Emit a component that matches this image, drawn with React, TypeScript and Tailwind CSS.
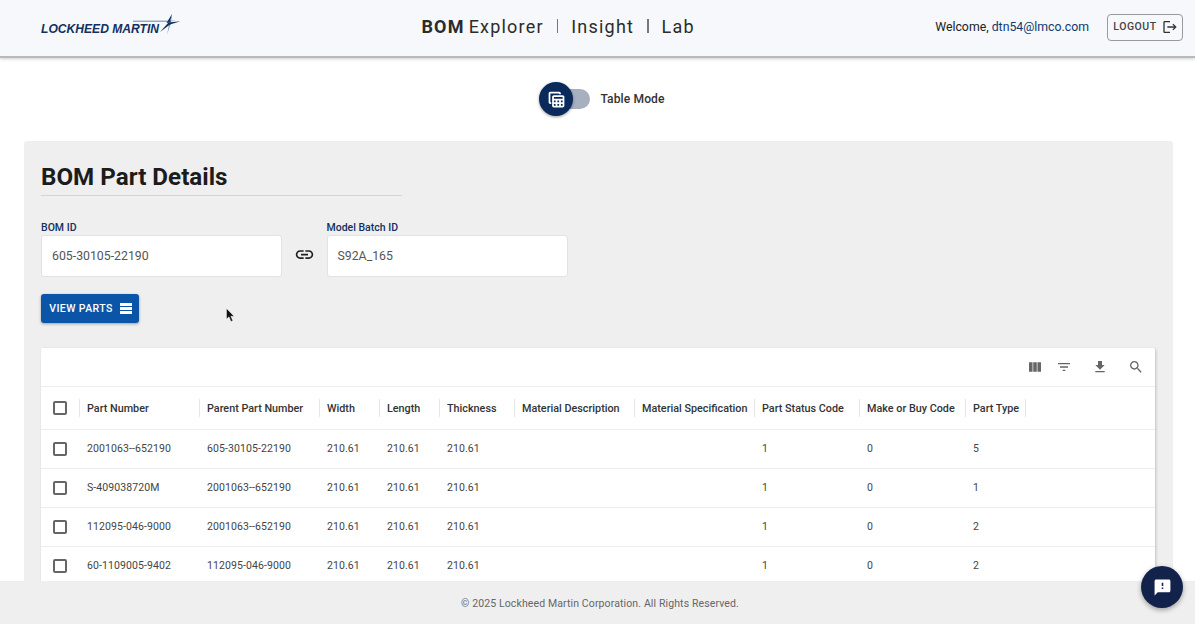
const columns = [
  { label: "Part Number", width: "w-[120px]" },
  { label: "Parent Part Number", width: "w-[120px]" },
  { label: "Width", width: "w-[60px]" },
  { label: "Length", width: "w-[60px]" },
  { label: "Thickness", width: "w-[75px]" },
  { label: "Material Description", width: "w-[120px]" },
  { label: "Material Specification", width: "w-[120px]" },
  { label: "Part Status Code", width: "w-[105px]" },
  { label: "Make or Buy Code", width: "w-[106px]" },
  { label: "Part Type", width: "w-[60px]" },
];

const rows = [
  ["2001063--652190", "605-30105-22190", "210.61", "210.61", "210.61", "", "", "1", "0", "5"],
  ["S-409038720M", "2001063--652190", "210.61", "210.61", "210.61", "", "", "1", "0", "1"],
  ["112095-046-9000", "2001063--652190", "210.61", "210.61", "210.61", "", "", "1", "0", "2"],
  ["60-1109005-9402", "112095-046-9000", "210.61", "210.61", "210.61", "", "", "1", "0", "2"],
];

// material icon paths
const icons = {
  columns: "M14.67 5v14H9.33V5h5.34zm1 14H21V5h-5.33v14zm-7.34 0V5H3v14h5.33z",
  filter: "M10 18h4v-2h-4v2zM3 6v2h18V6H3zm3 7h12v-2H6v2z",
  download: "M5 20h14v-2H5v2zM19 9h-4V3H9v6H5l7 7 7-7z",
  search:
    "M15.5 14h-.79l-.28-.27C15.41 12.59 16 11.11 16 9.5 16 5.91 13.09 3 9.5 3S3 5.91 3 9.5 5.91 16 9.5 16c1.61 0 3.09-.59 4.23-1.57l.27.28v.79l5 4.99L20.49 19l-4.99-5zm-6 0C7.01 14 5 11.99 5 9.5S7.01 5 9.5 5 14 7.01 14 9.5 11.99 14 9.5 14z",
  link: "M3.9 12c0-1.71 1.39-3.1 3.1-3.1h4V7H7c-2.76 0-5 2.24-5 5s2.24 5 5 5h4v-1.9H7c-1.71 0-3.1-1.39-3.1-3.1zM8 13h8v-2H8v2zm9-6h-4v1.9h4c1.71 0 3.1 1.39 3.1 3.1s-1.39 3.1-3.1 3.1h-4V17h4c2.76 0 5-2.24 5-5s-2.24-5-5-5z",
  table:
    "M19 7H9c-1.1 0-2 .9-2 2v10c0 1.1.9 2 2 2h10c1.1 0 2-.9 2-2V9c0-1.1-.9-2-2-2zm0 2v2H9V9h10zm-6 6v-2h2v2h-2zm2 2v2h-2v-2h2zm-4-2H9v-2h2v2zm6-2h2v2h-2v-2zm-8 4h2v2H9v-2zm8 2v-2h2v2h-2zM6 17H5c-1.1 0-2-.9-2-2V5c0-1.1.9-2 2-2h10c1.1 0 2 .9 2 2v1h-2V5H5v10h1v2z",
  logout:
    "M17 7l-1.41 1.41L18.17 11H8v2h10.17l-2.58 2.58L17 17l5-5zM4 5h8V3H4c-1.1 0-2 .9-2 2v14c0 1.1.9 2 2 2h8v-2H4V5z",
  feedback:
    "M20 2H4c-1.1 0-1.99.9-1.99 2L2 22l4-4h14c1.1 0 2-.9 2-2V4c0-1.1-.9-2-2-2zm-7 12h-2v-2h2v2zm0-4h-2V6h2v4z",
};

function Icon({ d, size, className }: { d: string; size: number; className?: string }) {
  return (
    <svg width={size} height={size} viewBox="0 0 24 24" fill="currentColor" className={className}>
      <path d={d} />
    </svg>
  );
}

function Logo() {
  return (
    <div className="flex items-center relative w-[140px] h-[24px]">
      <span className="font-['Liberation_Sans',sans-serif] font-bold italic text-[12.1px] text-[#12305f] whitespace-nowrap mt-[4px]">
        LOCKHEED MARTIN
      </span>
      <svg className="absolute left-[91px] top-[-2px]" width="50" height="24" viewBox="0 0 50 24" fill="none">
        <path d="M1 7.6 H44 L37 9 H1Z" fill="#9aa9bf" />
        <path d="M40 1 L34.5 10 L38 9.5Z" fill="#12305f" />
        <path d="M40 1 L37.5 9.5 L38.5 12Z" fill="#5f7697" />
        <path d="M37.5 9.5 L35 21.5 L38.5 11.5Z" fill="#8496b0" />
        <path d="M48.5 8.2 L36.5 9.6 L28 19 L38 11.6Z" fill="#12305f" />
      </svg>
    </div>
  );
}

function Checkbox() {
  return <div className="w-[14px] h-[14px] rounded-[2px] border-2 border-[#666]" />;
}

export default function App() {
  return (
    <div className="h-screen flex flex-col overflow-hidden bg-white font-['Roboto',sans-serif] relative">
      {/* Top bar */}
      <header className="relative z-10 h-[58px] shrink-0 bg-[#f6f8fb] border-b-2 border-[#b9b9b9] shadow-[0_1px_3px_rgba(0,0,0,0.2)] flex items-center justify-between pl-[41px] pr-[12px] pb-[2px]">
        <Logo />
        <div className="flex items-center text-[18px] tracking-[1.2px] text-[#2b2b2b] mb-[2px]">
          <span className="font-bold">BOM</span>
          <span className="ml-[4px]">Explorer</span>
          <span className="mx-[13px] w-[1.5px] h-[14px] bg-[#777]" />
          <span>Insight</span>
          <span className="mx-[13px] w-[1.5px] h-[14px] bg-[#777]" />
          <span>Lab</span>
        </div>
        <div className="flex items-center">
          <span className="text-[12.3px] text-[#222]">
            Welcome, <span className="text-[#0f3a70]">dtn54@lmco.com</span>
          </span>
          <button className="ml-[18px] w-[76px] h-[27px] flex items-center justify-center gap-[5px] pl-[1px] border border-[#9a9a9a] rounded-[4px] text-[10.5px] font-medium tracking-[0.5px] text-[#444]">
            LOGOUT
            <Icon d={icons.logout} size={16} className="text-[#333]" />
          </button>
        </div>
      </header>

      <main className="flex-1 min-h-0 overflow-hidden">
        {/* Mode switch */}
        <div className="h-[82px] flex items-center justify-center pl-[9px]">
          <div className="relative w-[50px] h-[34px] flex items-center">
            <div className="absolute left-[14px] w-[37px] h-[20px] rounded-full bg-[#a7b0bf]" />
            <div className="relative w-[34px] h-[34px] rounded-full bg-[#0b2a5c] shadow-[0_1px_3px_rgba(0,0,0,0.4)] flex items-center justify-center text-white">
              <Icon d={icons.table} size={21} />
            </div>
          </div>
          <span className="ml-[11px] text-[12.1px] font-medium text-[#333] tracking-[0.1px]">Table Mode</span>
        </div>

        <section className="mt-[1px] mr-[22px] ml-[24px] bg-[#efefef] rounded-t-[3px] pl-[17px] pr-[18px] pt-[20px] pb-[20px]">
          <h1 className="text-[24.2px] leading-[32px] pb-[2px] font-bold text-[#1c1c1c] w-[361px] border-b border-[#d4d4d4]">
            BOM Part Details
          </h1>

          <div className="flex items-end mt-[26px]">
            <div>
              <label className="block text-[10.5px] leading-[12px] font-medium text-[#12305f] mb-[1px]">BOM ID</label>
              <div className="w-[241px] h-[42px] bg-white rounded-[3px] border border-[#e2e2e2] flex items-center px-[10px] text-[12.3px] text-[#555]">
                605-30105-22190
              </div>
            </div>
            <div className="w-[44.5px] h-[42px] flex items-center justify-center text-[#222] pb-[4px]">
              <Icon d={icons.link} size={21} />
            </div>
            <div>
              <label className="block text-[10.5px] leading-[12px] font-medium text-[#12305f] mb-[1px]">Model Batch ID</label>
              <div className="w-[241px] h-[42px] bg-white rounded-[3px] border border-[#e2e2e2] flex items-center px-[10px] text-[12.3px] text-[#555]">
                S92A_165
              </div>
            </div>
          </div>

          <button className="mt-[17px] w-[98px] h-[29px] bg-[#0b55a8] rounded-[3px] shadow-[0_1px_3px_rgba(0,0,0,0.35)] flex items-center justify-center gap-[7px] pl-[1px] text-[10.5px] font-medium tracking-[0.4px] text-white">
            VIEW PARTS
            <span className="flex flex-col gap-[1.5px]">
              <span className="block w-[12px] h-[2.5px] bg-white" />
              <span className="block w-[12px] h-[2.5px] bg-white" />
              <span className="block w-[12px] h-[2.5px] bg-white" />
            </span>
          </button>

          {/* Parts table */}
          <div className="mt-[25px] bg-white rounded-[2px] shadow-[1px_1px_3px_rgba(0,0,0,0.2)]">
            <div className="h-[39px] flex items-center justify-end border-b border-[#ececec] text-[#666] pr-[11px]">
              <Icon d={icons.columns} size={16} />
              <Icon d={icons.filter} size={16} className="ml-[13px]" />
              <Icon d={icons.download} size={16} className="ml-[20px]" />
              <Icon d={icons.search} size={16} className="ml-[20px]" />
            </div>
            <div className="h-[43px] flex items-center border-b border-[#ececec]">
              <div className="w-[38px] flex justify-center">
                <Checkbox />
              </div>
              <div className="w-px h-[18px] bg-[#e6e6e6]" />
              {columns.map((c) => (
                <div key={c.label} className={`${c.width} shrink-0 h-[18px] flex items-center pl-[7px] pt-[2px] text-[10.8px] font-medium text-[#333] whitespace-nowrap border-r border-[#e6e6e6]`}>
                  {c.label}
                </div>
              ))}
            </div>
            {rows.map((row, i) => (
              <div key={i} className="h-[39px] flex items-center border-b border-[#ececec]">
                <div className="w-[38px] flex justify-center">
                  <Checkbox />
                </div>
                {row.map((cell, j) => (
                  <div key={j} className={`${columns[j].width} shrink-0 pl-[8px] text-[10.5px] text-[#444] tracking-[0.1px] whitespace-nowrap`}>
                    {cell}
                  </div>
                ))}
              </div>
            ))}
          </div>
        </section>
      </main>

      <footer className="relative z-10 h-[43px] shrink-0 bg-[#efefef] flex items-center justify-center pt-[2px] pl-[5px] text-[10.5px] tracking-[0.12px] text-[#666]">
        © 2025 Lockheed Martin Corporation. All Rights Reserved.
      </footer>

      {/* Feedback button */}
      <button className="absolute z-20 left-[1141px] top-[566px] w-[42px] h-[42px] rounded-full bg-[#12224a] shadow-[0_2px_5px_rgba(0,0,0,0.35)] flex items-center justify-center text-white">
        <Icon d={icons.feedback} size={19} />
      </button>

      {/* Mouse pointer */}
      <svg className="absolute z-20 left-[226px] top-[308px]" width="9" height="15" viewBox="0 0 9 15">
        <path d="M0.5 0.5 V11 L3 8.8 L5 13.5 L6.8 12.7 L4.8 8.2 H8 Z" fill="#111" stroke="#fff" strokeWidth="0.4" />
      </svg>
    </div>
  );
}
